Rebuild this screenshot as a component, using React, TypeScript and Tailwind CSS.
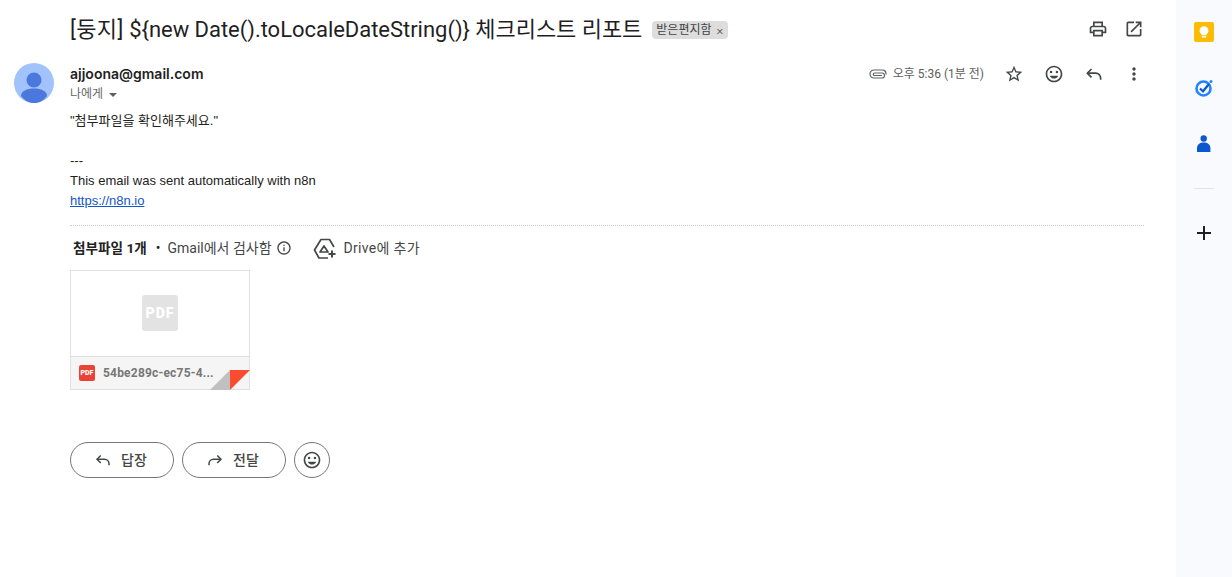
import React from "react";

const ROBOTO = 'Roboto, "Noto Sans CJK KR", sans-serif';

function Ico({ d, size = 20, className = "", children }: { d?: string; size?: number; className?: string; children?: React.ReactNode }) {
  return (
    <svg width={size} height={size} viewBox="0 0 24 24" fill="currentColor" className={"block shrink-0 " + className}>
      {d ? <path d={d} /> : null}
      {children}
    </svg>
  );
}

const Emoji = ({ size = 20 }: { size?: number }) => (
  <Ico size={size}>
    <circle cx="15.5" cy="9.5" r="1.5" />
    <circle cx="8.5" cy="9.5" r="1.5" />
    <path d="M12 17.5c2.33 0 4.31-1.46 5.11-3.5H6.89c.8 2.04 2.78 3.5 5.11 3.5z" />
    <path d="M11.99 2C6.47 2 2 6.48 2 12s4.47 10 9.99 10C17.52 22 22 17.52 22 12S17.52 2 11.99 2zM12 20c-4.42 0-8-3.58-8-8s3.58-8 8-8 8 3.58 8 8-3.58 8-8 8z" />
  </Ico>
);

const Reply = ({ size = 20, flip = false }: { size?: number; flip?: boolean }) => (
  <svg width={size} height={size} viewBox="0 0 24 24" fill="none" stroke="currentColor" strokeWidth="2" className={"block shrink-0 " + (flip ? "-scale-x-100" : "")}>
    <path d="M9 6 4 11l5 5" />
    <path d="M4 11h10a6 6 0 0 1 6 6v2" />
  </svg>
);

export default function App() {
  return (
    <div className="flex h-[577px] w-[1232px] overflow-hidden bg-white text-[#222]" style={{ fontFamily: ROBOTO }}>
      <main className="w-[1176px] shrink-0">
        {/* subject */}
        <div className="flex h-[58px] items-center pl-[70px] pr-[32px]">
          <h1 className="mt-[2px] text-[22px] font-normal leading-[28px] text-[#1f1f1f]">
            <span className="tracking-[0.4px]">[둥지]</span>
            <span className="tracking-[-0.03px]">{" ${new Date().toLocaleDateString()} "}</span>
            <span className="tracking-[-0.05px]">체크리스트 리포트</span>
          </h1>
          <span className="ml-[10px] mt-[2px] flex h-[18px] items-center gap-[5px] rounded-[4px] bg-[#dddddd] pl-[4px] pr-[5px] text-[12px] text-[#444]">
            받은편지함
            <span className="text-[13px] font-light leading-none">×</span>
          </span>
          <div className="ml-auto flex items-center gap-[16px] text-[#444746]">
            <Ico size={20} d="M19 8h-1V3H6v5H5c-1.66 0-3 1.34-3 3v6h4v4h12v-4h4v-6c0-1.66-1.34-3-3-3zM8 5h8v3H8V5zm8 12v2H8v-4h8v2zm2-2v-2H6v2H4v-4c0-.55.45-1 1-1h14c.55 0 1 .45 1 1v4h-2z" />
            <Ico size={20} d="M19 19H5V5h7V3H5c-1.11 0-2 .9-2 2v14c0 1.1.89 2 2 2h14c1.1 0 2-.9 2-2v-7h-2v7zM14 3v2h3.59l-9.83 9.83 1.41 1.41L19 6.41V10h2V3h-7z" />
          </div>
        </div>

        {/* sender */}
        <div className="flex h-[45px] pl-[14px] pr-[32px]">
          <svg width="40" height="40" viewBox="0 0 40 40" className="mt-[5px] block shrink-0">
            <circle cx="20" cy="20" r="20" fill="#a1c2fa" />
            <circle cx="20" cy="17" r="7.5" fill="#4a78dd" />
            <path d="M7 33c0-5 6-7.5 13-7.5S33 28 33 33c-3.5 4.5-8 7-13 7S10.5 37.5 7 33z" fill="#4a78dd" />
          </svg>
          <div className="ml-[16px] flex-1 pt-[2px]">
            <div className="flex h-[28px] items-center">
              <span className="-mt-[2px] text-[14px] font-semibold text-[#1f1f1f]" style={{ fontFamily: 'Inter, sans-serif' }}>ajjoona@gmail.com</span>
              <div className="ml-auto flex items-center text-[#444746]">
                <svg width="18" height="10" viewBox="0 0 18 10" fill="none" stroke="#5f6368" strokeWidth="1.2" className="mr-[6px] block">
                  <path d="M17 5.5V4.500A3.500 3.500 0 0 0 13.500 1H5A4 4 0 0 0 5 9H13A2.500 2.500 0 0 0 13 4H5.500A1 1 0 0 0 5.500 6.500H13" />
                </svg>
                <span className="mr-[20px] text-[12px] text-[#5e5e5e]">오후 5:36 (1분 전)</span>
                <div className="flex items-center gap-[20px]">
                  <Ico size={20} d="M22 9.24l-7.19-.62L12 2 9.19 8.63 2 9.24l5.46 4.73L5.82 21 12 17.27 18.18 21l-1.63-7.03L22 9.24zM12 15.4l-3.76 2.27 1-4.28-3.32-2.88 4.38-.38L12 6.1l1.71 4.04 4.38.38-3.32 2.88 1 4.28L12 15.4z" />
                  <Emoji />
                  <Reply />
                  <Ico size={20} d="M12 8c1.1 0 2-.9 2-2s-.9-2-2-2-2 .9-2 2 .9 2 2 2zm0 2c-1.1 0-2 .9-2 2s.9 2 2 2 2-.9 2-2-.9-2-2-2zm0 6c-1.1 0-2 .9-2 2s.9 2 2 2 2-.9 2-2-.9-2-2-2z" />
                </div>
              </div>
            </div>
            <div className="flex h-[12px] items-center text-[12px] text-[#666]">
              나에게
              <span className="ml-[6px] mt-[2px] h-0 w-0 border-x-[4px] border-t-[4px] border-x-transparent border-t-[#5e5e5e]" />
            </div>
          </div>
        </div>

        {/* body */}
        <div className="ml-[70px] mr-[32px] mt-[8px] text-[13px] leading-[20px] text-[#222]" style={{ fontFamily: '"Liberation Sans", "Noto Sans CJK KR", sans-serif' }}>
          <div>"첨부파일을 확인해주세요."</div>
          <div className="h-[20px]" />
          <div>---</div>
          <div>This email was sent automatically with n8n</div>
          <a className="text-[#1155cc] underline">https://n8n.io</a>
        </div>

        {/* attachments */}
        <div className="ml-[70px] mr-[32px] mt-[14px] border-t border-dotted border-[#cfcfcf]">
          <div className="flex h-[44px] items-center pl-[3px] text-[14px] text-[#444746]">
            <span className="text-[13.6px] font-bold text-[#222]">첨부파일 1개</span>
            <span className="ml-[9px] mr-[7px] text-[#222]">•</span>
            <span>Gmail에서 검사함</span>
            <svg width="16" height="16" viewBox="0 0 24 24" fill="currentColor" className="ml-[4px] block">
              <path d="M11 7h2v2h-2zm0 4h2v6h-2zm1-9C6.48 2 2 6.48 2 12s4.48 10 10 10 10-4.48 10-10S17.52 2 12 2zm0 18c-4.41 0-8-3.59-8-8s3.59-8 8-8 8 3.59 8 8-3.59 8-8 8z" />
            </svg>
            <svg width="24" height="24" viewBox="0 0 24 24" fill="none" stroke="#444746" strokeWidth="1.7" strokeLinejoin="round" className="ml-[21px] mt-[4px] block">
              <path d="M15 20H6L1.5 12 8 1.500h8.500L21 9" />
              <path d="M11 8l-4 6h8z" />
              <path d="M19 12.500v7M15.500 16h7" strokeWidth="2" />
            </svg>
            <span className="ml-[7px] tracking-[0.3px]">Drive에 추가</span>
          </div>

          <div className="relative flex h-[120px] w-[180px] flex-col border border-[#e0e0e0]">
            <div className="flex h-[85px] items-center justify-center bg-white pb-[1px]">
              <div className="flex h-[36px] w-[36px] items-center justify-center rounded-[3px] bg-[#e3e3e3] text-[14px] font-black leading-none tracking-[1px] text-white">
                PDF
              </div>
            </div>
            <div className="flex flex-1 items-center border-t border-[#e0e0e0] bg-[#f5f5f5] pl-[8px]">
              <div className="flex h-[16px] w-[16px] items-center justify-center rounded-[2px] bg-[#ea4335] text-[7px] font-black leading-none text-white">
                PDF
              </div>
              <span className="ml-[8px] text-[12px] font-bold tracking-[0.2px] text-[#777]">54be289c-ec75-4...</span>
            </div>
            <svg width="40" height="20" viewBox="0 0 40 20" className="absolute -bottom-px -right-px block">
              <path d="M20 0v20H0z" fill="#c0c0c0" />
              <path d="M20 0h20L20 20z" fill="#fc4c2f" />
            </svg>
          </div>

          {/* actions */}
          <div className="mt-[52px] flex gap-[8px] text-[14px] font-medium text-[#444746]">
            <button className="flex h-[36px] w-[104px] items-center justify-center gap-[9px] rounded-full border border-[#747775] pr-[3px]">
              <Reply size={18} />
              답장
            </button>
            <button className="flex h-[36px] w-[104px] items-center justify-center gap-[9px] rounded-full border border-[#747775] pr-[3px]">
              <Reply size={18} flip />
              전달
            </button>
            <button className="flex h-[36px] w-[36px] items-center justify-center rounded-full border border-[#747775]">
              <Emoji />
            </button>
          </div>
        </div>
      </main>

      {/* side panel */}
      <aside className="flex w-[56px] shrink-0 flex-col items-center bg-[#f8fafd] pt-[22px]">
        <svg width="20" height="20" viewBox="0 0 20 20" className="block">
          <rect width="20" height="20" rx="2" fill="#fbbc04" />
          <path d="M10 4.200a4.400 4.400 0 0 0-2.500 8V13.300h5v-1.100a4.400 4.400 0 0 0-2.500-8zM7.800 14.100h4.400v1.400H7.800z" fill="#fff" />
        </svg>
        <svg width="20" height="20" viewBox="0 0 20 20" fill="none" className="mt-[36px] block">
          <circle cx="9.500" cy="10.500" r="7" stroke="#2684fc" strokeWidth="2.600" />
          <path d="m6 10.500 3 2.800 6-7.300" stroke="#0b57d0" strokeWidth="2.200" />
          <circle cx="17" cy="3.500" r="1.500" fill="#2684fc" />
        </svg>
        <svg width="20" height="20" viewBox="0 0 20 20" className="mt-[36px] block">
          <circle cx="9.700" cy="4.500" r="3.200" fill="#0b57d0" />
          <path d="M3 18v-4c0-3.500 3-5.500 6.700-5.500s6.700 2 6.700 5.500v4z" fill="#0b57d0" />
        </svg>
        <div className="mt-[34px] h-px w-[20px] bg-[#e1e3e6]" />
        <svg width="24" height="24" viewBox="0 0 24 24" fill="#1f1f1f" className="mt-[32px] block">
          <path d="M19 13h-6v6h-2v-6H5v-2h6V5h2v6h6v2z" />
        </svg>
      </aside>
    </div>
  );
}
